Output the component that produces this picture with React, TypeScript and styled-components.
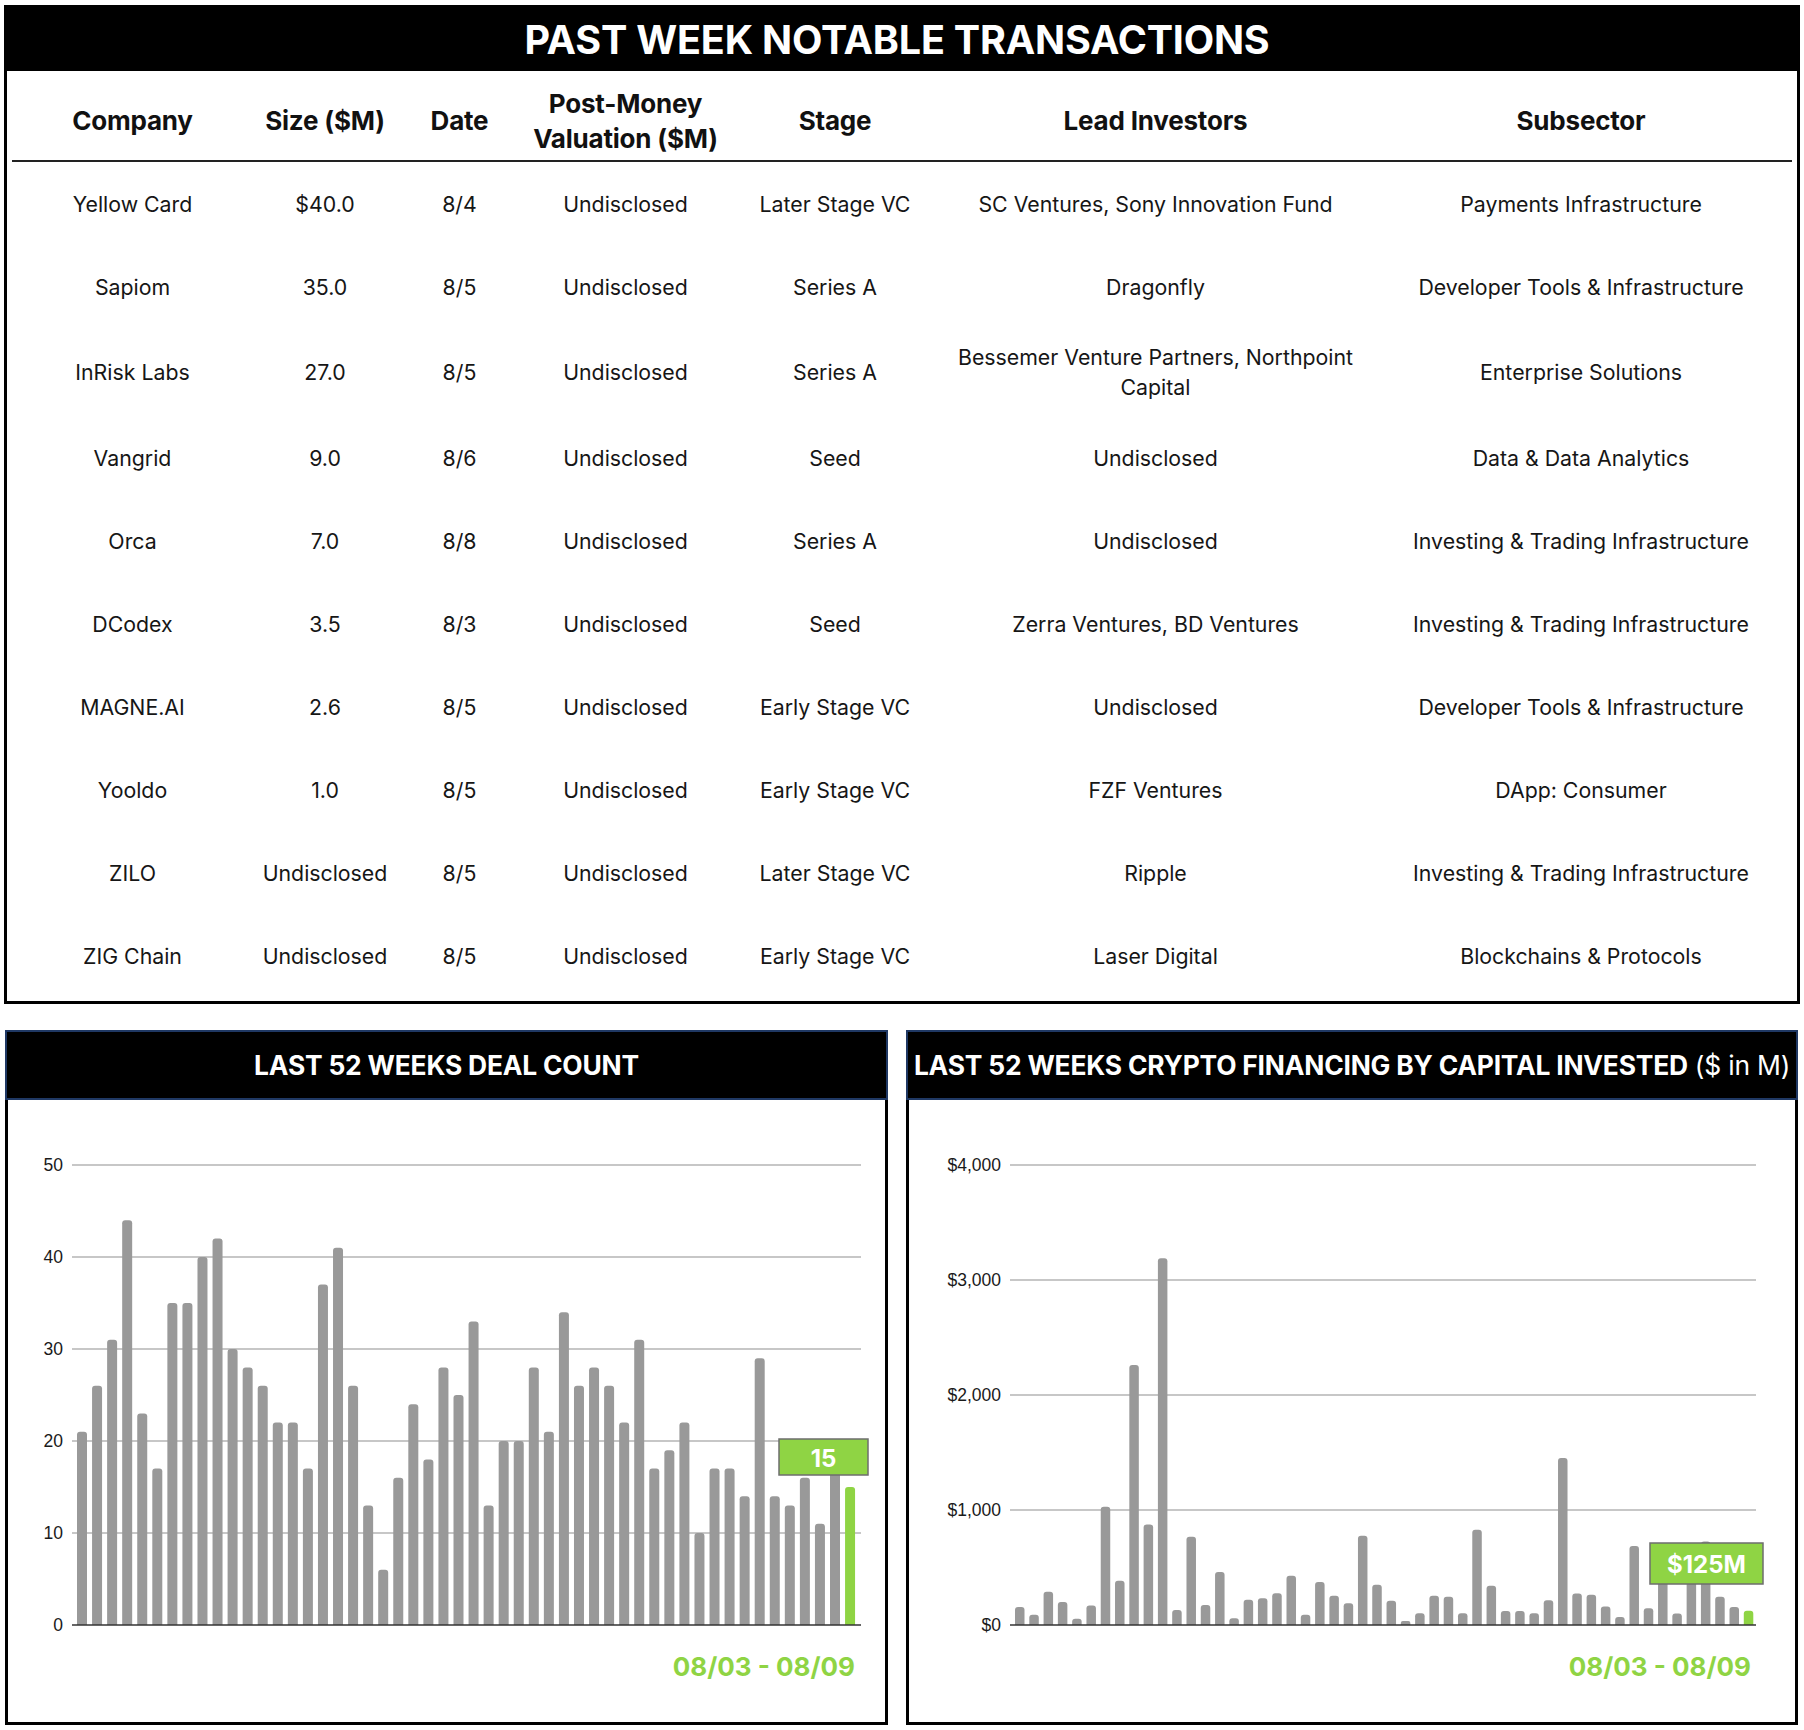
import React from "react";
import styled, { createGlobalStyle } from "styled-components";

const GREEN = "#8fd444";
const BAR = "#999999";

const GlobalStyle = createGlobalStyle`
  html, body { margin: 0; padding: 0; background: #fff; }
  body { font-family: Inter, "Noto Sans", Arial, sans-serif; color: #151515; }
  * { box-sizing: border-box; }
`;

const Page = styled.div`
  width: 1804px;
  padding: 5px 4px 5px 4px;
  display: flex;
  flex-direction: column;
  gap: 26px;
`;

const TablePanel = styled.section`
  border: 3px solid #000;
`;

const TitleBar = styled.header`
  height: 63px;
  padding-right: 10px;
  background: #000;
  color: #fff;
  display: flex;
  align-items: center;
  justify-content: center;
  font-size: 39.5px;
  font-weight: 700;
  letter-spacing: -0.2px;
`;

const Table = styled.div`
  padding: 0 5px 4px 5px;
`;

const COLS = "241px 144px 125px 207px 212px 429px 1fr";

const HeadRow = styled.div`
  display: grid;
  grid-template-columns: ${COLS};
  height: 91px;
  padding-top: 10px;
  border-bottom: 2px solid #222;
  align-items: center;
`;

const HeadCell = styled.div`
  font-size: 26px;
  font-weight: 700;
  line-height: 35px;
  letter-spacing: -0.2px;
  text-align: center;
  color: #111;
`;

const Row = styled.div`
  display: grid;
  grid-template-columns: ${COLS};
  min-height: 83px;
  align-items: center;
`;

const Cell = styled.div`
  font-size: 21.3px;
  font-weight: 400;
  line-height: 30px;
  padding: 14px 8px;
  text-align: center;
  color: #161616;
`;

const ChartsRow = styled.div`
  display: grid;
  grid-template-columns: 883px 892px;
  column-gap: 18px;
  padding-left: 1px;
`;

const ChartPanel = styled.section`
  height: 695px;
  border: 3px solid #000;
  border-top: 0;
  display: flex;
  flex-direction: column;
`;

const ChartHeader = styled.header`
  height: 70px;
  margin: 0 -3px;
  background: #000;
  border: 2px solid #1f3864;
  color: #fff;
  display: flex;
  align-items: center;
  justify-content: center;
  font-size: 26.4px;
  font-weight: 700;
  letter-spacing: -0.2px;
  white-space: nowrap;
  overflow: visible;
`;

const Light = styled.span`
  font-weight: 400;
  margin-left: 7px;
`;

const ChartBody = styled.div`
  flex: 1;
  display: flex;
  flex-direction: column;
`;

const ChartSvg = styled.svg`
  display: block;
`;

const DateLabel = styled.div<{ $right: number }>`
  margin-top: 5px;
  padding-right: ${(p) => p.$right}px;
  text-align: right;
  color: ${GREEN};
  font-size: 26px;
  font-weight: 700;
  line-height: 34px;
`;

type RowData = [string, string, string, string, string, string, string];

const HEADERS: React.ReactNode[] = [
  "Company",
  "Size ($M)",
  "Date",
  <>
    Post-Money
    <br />
    Valuation ($M)
  </>,
  "Stage",
  "Lead Investors",
  "Subsector",
];

const ROWS: RowData[] = [
  ["Yellow Card", "$40.0", "8/4", "Undisclosed", "Later Stage VC", "SC Ventures, Sony Innovation Fund", "Payments Infrastructure"],
  ["Sapiom", "35.0", "8/5", "Undisclosed", "Series A", "Dragonfly", "Developer Tools & Infrastructure"],
  ["InRisk Labs", "27.0", "8/5", "Undisclosed", "Series A", "Bessemer Venture Partners, Northpoint Capital", "Enterprise Solutions"],
  ["Vangrid", "9.0", "8/6", "Undisclosed", "Seed", "Undisclosed", "Data & Data Analytics"],
  ["Orca", "7.0", "8/8", "Undisclosed", "Series A", "Undisclosed", "Investing & Trading Infrastructure"],
  ["DCodex", "3.5", "8/3", "Undisclosed", "Seed", "Zerra Ventures, BD Ventures", "Investing & Trading Infrastructure"],
  ["MAGNE.AI", "2.6", "8/5", "Undisclosed", "Early Stage VC", "Undisclosed", "Developer Tools & Infrastructure"],
  ["Yooldo", "1.0", "8/5", "Undisclosed", "Early Stage VC", "FZF Ventures", "DApp: Consumer"],
  ["ZILO", "Undisclosed", "8/5", "Undisclosed", "Later Stage VC", "Ripple", "Investing & Trading Infrastructure"],
  ["ZIG Chain", "Undisclosed", "8/5", "Undisclosed", "Early Stage VC", "Laser Digital", "Blockchains & Protocols"],
];

const DEALS = [
  21, 26, 31, 44, 23, 17, 35, 35, 40, 42,
  30, 28, 26, 22, 22, 17, 37, 41, 26, 13,
  6, 16, 24, 18, 28, 25, 33, 13, 20, 20,
  28, 21, 34, 26, 28, 26, 22, 31, 17, 19,
  22, 10, 17, 17, 14, 29, 14, 13, 16, 11,
  17, 15,
];

const CAPITAL = [
  157, 90, 289, 201, 55, 169, 1029, 385, 2260, 875,
  3190, 131, 767, 175, 461, 58, 219, 233, 277, 429,
  90, 373, 254, 190, 776, 350, 210, 35, 102, 254,
  245, 102, 828, 341, 122, 122, 102, 216, 1452, 274,
  262, 160, 70, 688, 146, 520, 99, 640, 726, 245,
  157, 125,
];

type ChartProps = {
  width: number;
  height: number;
  values: number[];
  max: number;
  ticks: number[];
  fmt: (v: number) => string;
  labelRight: number;
  gridX0: number;
  gridX1: number;
  barX0: number;
  step: number;
  barW: number;
  yTop: number;
  yBase: number;
  box: { x: number; y: number; w: number; h: number; text: string };
};

function barPath(x: number, y: number, w: number, base: number, r: number) {
  const rr = Math.min(r, (base - y) / 2, w / 2);
  return `M${x},${base} L${x},${y + rr} Q${x},${y} ${x + rr},${y} L${x + w - rr},${y} Q${x + w},${y} ${x + w},${y + rr} L${x + w},${base} Z`;
}

function BarChart(p: ChartProps) {
  const scale = (v: number) => p.yBase - ((p.yBase - p.yTop) * v) / p.max;
  return (
    <ChartSvg width={p.width} height={p.height} viewBox={`0 0 ${p.width} ${p.height}`}>
      {p.ticks.map((t) => (
        <g key={t}>
          {t !== 0 && (
            <line x1={p.gridX0} x2={p.gridX1} y1={scale(t)} y2={scale(t)} stroke="#b5b5b5" strokeWidth={1.5} />
          )}
          <text
            x={p.labelRight}
            y={scale(t)}
            textAnchor="end"
            dominantBaseline="central"
            fontFamily='"Liberation Sans", Arial, sans-serif'
            fontSize={17.5}
            fill="#1a1a1a"
          >
            {p.fmt(t)}
          </text>
        </g>
      ))}
      {p.values.map((v, i) => {
        const x = p.barX0 + i * p.step;
        const last = i === p.values.length - 1;
        return <path key={i} d={barPath(x, scale(v), p.barW, p.yBase, 3)} fill={last ? GREEN : BAR} />;
      })}
      <line x1={p.gridX0} x2={p.gridX1} y1={p.yBase} y2={p.yBase} stroke="#333" strokeWidth={1.5} />
      <rect x={p.box.x} y={p.box.y} width={p.box.w} height={p.box.h} fill={GREEN} stroke="#6e6e6e" strokeWidth={1.5} />
      <text
        x={p.box.x + p.box.w / 2}
        y={p.box.y + p.box.h / 2 + 1}
        textAnchor="middle"
        dominantBaseline="central"
        fontFamily="Inter, Arial, sans-serif"
        fontWeight={700}
        fontSize={24}
        fill="#fff"
      >
        {p.box.text}
      </text>
    </ChartSvg>
  );
}

export default function App() {
  return (
    <>
      <GlobalStyle />
      <Page>
        <TablePanel>
          <TitleBar>PAST WEEK NOTABLE TRANSACTIONS</TitleBar>
          <Table>
            <HeadRow>
              {HEADERS.map((h, i) => (
                <HeadCell key={i}>{h}</HeadCell>
              ))}
            </HeadRow>
            {ROWS.map((r) => (
              <Row key={r[0]}>
                {r.map((c, i) => (
                  <Cell key={i}>{c}</Cell>
                ))}
              </Row>
            ))}
          </Table>
        </TablePanel>

        <ChartsRow>
          <ChartPanel>
            <ChartHeader>LAST 52 WEEKS DEAL COUNT</ChartHeader>
            <ChartBody>
              <BarChart
                width={877}
                height={545}
                values={DEALS}
                max={50}
                ticks={[0, 10, 20, 30, 40, 50]}
                fmt={(v) => String(v)}
                labelRight={55}
                gridX0={64}
                gridX1={853}
                barX0={69}
                step={15.06}
                barW={10}
                yTop={65}
                yBase={525}
                box={{ x: 771, y: 339, w: 89, h: 36, text: "15" }}
              />
              <DateLabel $right={30}>08/03 - 08/09</DateLabel>
            </ChartBody>
          </ChartPanel>

          <ChartPanel>
            <ChartHeader>
              LAST 52 WEEKS CRYPTO FINANCING BY CAPITAL INVESTED<Light>($ in M)</Light>
            </ChartHeader>
            <ChartBody>
              <BarChart
                width={886}
                height={545}
                values={CAPITAL}
                max={4000}
                ticks={[0, 1000, 2000, 3000, 4000]}
                fmt={(v) => "$" + v.toLocaleString("en-US")}
                labelRight={92}
                gridX0={101}
                gridX1={847}
                barX0={106}
                step={14.29}
                barW={9.5}
                yTop={65}
                yBase={525}
                box={{ x: 741, y: 443, w: 113, h: 41, text: "$125M" }}
              />
              <DateLabel $right={44}>08/03 - 08/09</DateLabel>
            </ChartBody>
          </ChartPanel>
        </ChartsRow>
      </Page>
    </>
  );
}
